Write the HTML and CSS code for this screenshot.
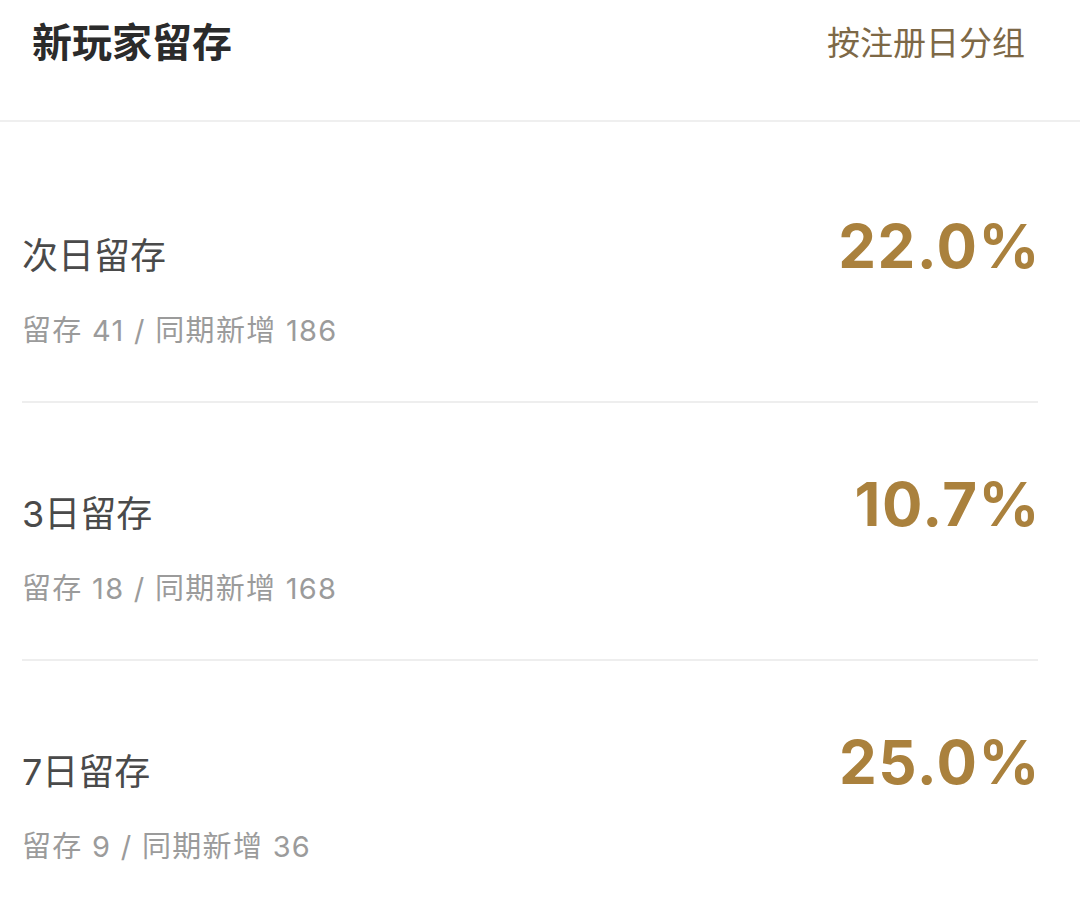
FILE: index.html
```html
<!DOCTYPE html>
<html lang="zh-CN">
<head>
<meta charset="utf-8">
<title>新玩家留存</title>
<link rel="stylesheet" href="styles.css">
</head>
<body>
  <header class="head">
    <h1 class="head-title">新玩家留存</h1>
    <a class="head-action">按注册日分组</a>
  </header>
  <ul class="stats">
    <li class="stat">
      <div class="stat-info">
        <div class="stat-label">次日留存</div>
        <div class="stat-sub">留存 41 / 同期新增 186</div>
      </div>
      <div class="stat-value">22.0%</div>
    </li>
    <li class="stat">
      <div class="stat-info">
        <div class="stat-label">3日留存</div>
        <div class="stat-sub">留存 18 / 同期新增 168</div>
      </div>
      <div class="stat-value">10.7%</div>
    </li>
    <li class="stat">
      <div class="stat-info">
        <div class="stat-label">7日留存</div>
        <div class="stat-sub">留存 9 / 同期新增 36</div>
      </div>
      <div class="stat-value">25.0%</div>
    </li>
  </ul>
</body>
</html>
```

FILE: styles.css
```css
* {
  box-sizing: border-box;
}

body {
  margin: 0;
  background: #ffffff;
  font-family: Inter, "Noto Sans CJK SC", sans-serif;
  -webkit-font-smoothing: antialiased;
}

.head {
  height: 122px;
  padding: 18px 55px 0 32px;
  display: flex;
  justify-content: space-between;
  align-items: flex-start;
  border-bottom: 2px solid #efefef;
}

.head-title {
  margin: 0;
  font-size: 40px;
  line-height: 50px;
  font-weight: 700;
  color: #2b2b2b;
}

.head-action {
  font-size: 33px;
  line-height: 50px;
  color: #7d6846;
  cursor: pointer;
}

.stats {
  list-style: none;
  margin: 0;
  padding: 23px 42px 0 22px;
}

.stat {
  display: flex;
  justify-content: space-between;
  align-items: flex-start;
  padding: 87px 0 50px;
  border-bottom: 2px solid #eeeeee;
}

.stat:last-child {
  border-bottom: none;
}

.stat-label {
  font-size: 36px;
  line-height: 48px;
  color: #4a4a4a;
}

.stat-sub {
  margin-top: 31px;
  font-size: 29px;
  line-height: 40px;
  letter-spacing: 1.3px;
  color: #9b9b9b;
}

.stat-value {
  margin-top: -26px;
  margin-right: -3px;
  font-size: 60px;
  line-height: 80px;
  font-weight: 700;
  color: #aa813d;
  letter-spacing: 1.5px;
}
```
